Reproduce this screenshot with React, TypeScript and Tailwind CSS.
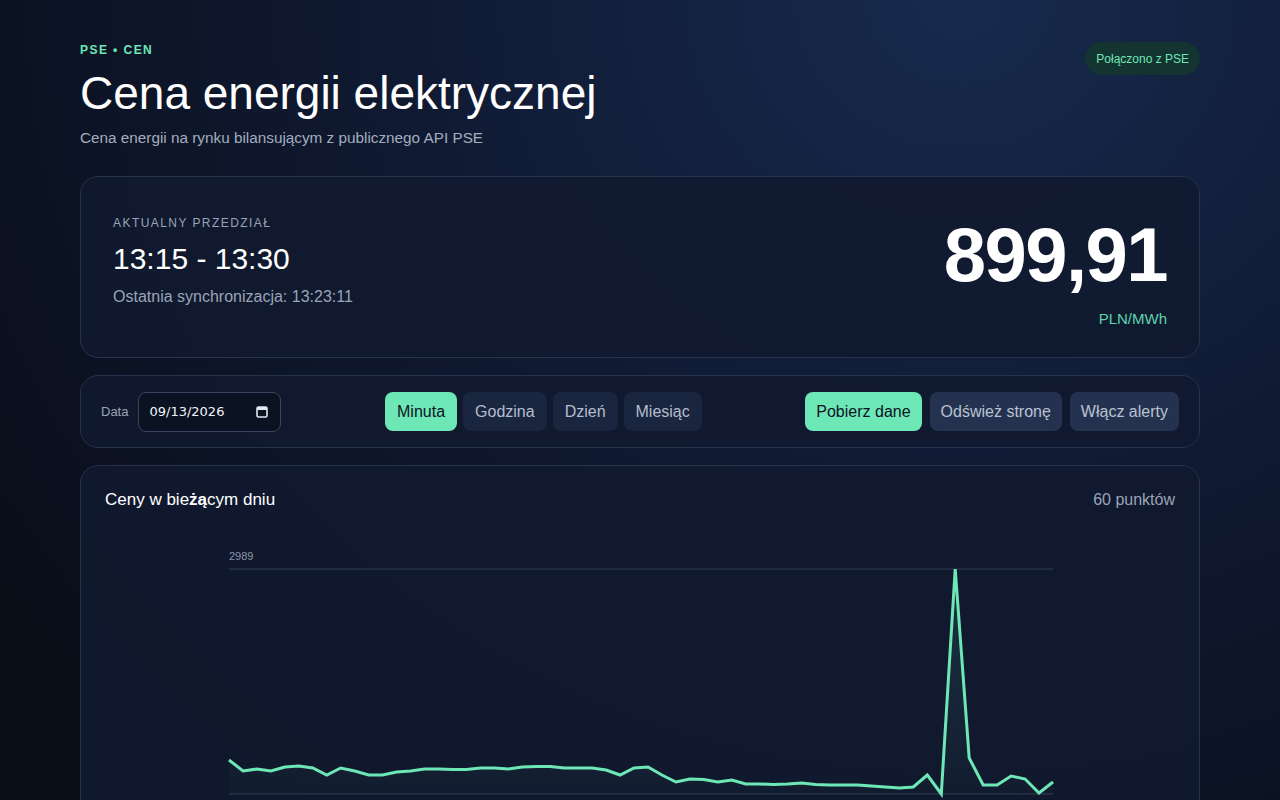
import { useState } from "react";

// ─── Data ─────────────────────────────────────────────────────────────────────

// y offsets (px) within the plot, 0 = max (2989), 225 = min
const series = [
  191, 202, 200, 202, 198, 197, 199, 206, 199, 202, 206, 206, 203, 202, 200, 200,
  200.5, 200.5, 199, 199, 200, 198, 197.5, 197.5, 199, 199, 199, 201, 206, 199,
  198, 206, 213, 210, 210.5, 213, 211, 215, 215, 215.5, 215, 214, 215.5, 216, 216,
  216, 217, 218, 219, 218, 206, 225, 0, 189, 216, 216, 207, 210, 224, 213,
];

const tabs = ["Minuta", "Godzina", "Dzień", "Miesiąc"];

// ─── Chart ────────────────────────────────────────────────────────────────────

function PriceChart() {
  const left = 124;
  const width = 824;
  const top = 38;
  const step = width / (series.length - 1);
  const pts = series.map((v, i) => [left + i * step, top + v] as const);
  const line = pts.map(([x, y], i) => `${i === 0 ? "M" : "L"}${x.toFixed(1)},${y}`).join(" ");
  const area = `${line} L${left + width},${top + 225} L${left},${top + 225} Z`;

  return (
    <svg width="1072" height="300" viewBox="0 0 1072 300" className="block">
      <defs>
        <linearGradient id="fill" x1="0" y1="0" x2="0" y2="1">
          <stop offset="0%" stopColor="#6ee7b7" stopOpacity="0.12" />
          <stop offset="100%" stopColor="#6ee7b7" stopOpacity="0.02" />
        </linearGradient>
      </defs>
      <text x={left} y={29} fill="#8b96ab" fontSize="11" fontFamily="Liberation Sans, sans-serif">
        2989
      </text>
      <line x1={left} x2={left + width} y1={top} y2={top} stroke="#26314a" strokeWidth="1.5" />
      <line x1={left} x2={left + width} y1={top + 225} y2={top + 225} stroke="#26314a" strokeWidth="1.5" />
      <path d={area} fill="url(#fill)" />
      <path d={line} fill="none" stroke="#6ee7b7" strokeWidth="3" strokeLinejoin="miter" strokeMiterlimit={10} />
    </svg>
  );
}

// ─── Page ─────────────────────────────────────────────────────────────────────

export default function App() {
  const [tab, setTab] = useState("Minuta");

  return (
    <div className="min-h-screen w-full bg-[#090e19] bg-[radial-gradient(ellipse_at_75%_0%,#172a4e_0%,#101a33_40%,#090e19_85%)] font-['Liberation_Sans',sans-serif] text-slate-100">
      <div className="mx-auto w-[1120px] pt-[42px]">
        {/* Header */}
        <div className="flex items-start justify-between">
          <div>
            <p className="text-[12px] font-bold leading-[16px] tracking-[0.12em] text-[#6ee7b7]">PSE • CEN</p>
            <h1 className="mt-[9px] text-[46px] leading-[52px] text-white">Cena energii elektrycznej</h1>
            <p className="mt-[9px] text-[15.3px] leading-[20px] text-[#a3adbf]">
              Cena energii na rynku bilansującym z publicznego API PSE
            </p>
          </div>
          <span className="inline-flex h-[33px] items-center rounded-full bg-[#133430] px-[11px] text-[12px] text-[#6ee7b7]">
            Połączono z PSE
          </span>
        </div>

        {/* Current interval */}
        <div className="mt-[28px] flex h-[182px] items-start justify-between rounded-[18px] border border-[#27324b] bg-[#111a2f]/90 px-[32px] pt-[37px]">
          <div>
            <p className="text-[12px] tracking-[0.12em] text-[#9aa4b8]">AKTUALNY PRZEDZIAŁ</p>
            <p className="mt-[8px] text-[30px] leading-[38px] text-white">13:15 - 13:30</p>
            <p className="mt-[7px] text-[16px] text-[#9aa4b8]">Ostatnia synchronizacja: 13:23:11</p>
          </div>
          <div className="flex flex-col items-end">
            <p className="text-[76px] font-semibold leading-[82px] tracking-[-0.02em] text-white">899,91</p>
            <p className="mt-[12px] text-[15px] text-[#5fd3ad]">PLN/MWh</p>
          </div>
        </div>

        {/* Controls */}
        <div className="mt-[17px] flex h-[73px] items-center justify-between rounded-[18px] border border-[#27324b] bg-[#111a2f]/90 px-[20px]">
          <div className="flex items-center gap-[10px]">
            <span className="text-[13px] text-[#9aa4b8]">Data</span>
            <div className="flex h-[40px] w-[143px] items-center justify-between rounded-[8px] border border-[#39455f] bg-[#0b1222] pl-[10px] pr-[12px]">
              <span className="font-['DejaVu_Sans',sans-serif] text-[13px] text-slate-100">09/13/2026</span>
              <svg width="12" height="13" viewBox="0 0 12 13">
                <rect x="1" y="2" width="10" height="10" rx="1.5" fill="none" stroke="#e2e8f0" strokeWidth="1.6" />
                <rect x="1" y="2" width="10" height="3" fill="#e2e8f0" />
              </svg>
            </div>
          </div>
          <div className="flex items-center gap-[6px]">
            {tabs.map((t) => (
              <button
                key={t}
                onClick={() => setTab(t)}
                className={`h-[39px] rounded-[8px] px-[12px] text-[16px] ${
                  tab === t ? "bg-[#6ee7b7] text-[#0b1322]" : "bg-[#1a2540] text-[#b4bdcd]"
                }`}
              >
                {t}
              </button>
            ))}
          </div>
          <div className="flex items-center gap-[8px]">
            <button className="h-[39px] rounded-[8px] bg-[#6ee7b7] px-[11px] text-[16px] text-[#0b1322]">Pobierz dane</button>
            <button className="h-[39px] rounded-[8px] bg-[#25324f] px-[11px] text-[16px] text-[#b9c2d2]">Odśwież stronę</button>
            <button className="h-[39px] rounded-[8px] bg-[#25324f] px-[11px] text-[16px] text-[#b9c2d2]">Włącz alerty</button>
          </div>
        </div>

        {/* Chart */}
        <div className="mt-[17px] h-[400px] rounded-[18px] border border-[#27324b] bg-[#111a2f]/90 px-[24px] pt-[21px]">
          <div className="flex items-center justify-between">
            <h2 className="text-[17px] text-white">
              Ceny w bie<span className="font-bold">żą</span>cym dniu
            </h2>
            <span className="text-[16px] text-[#9aa4b8]">60 punktów</span>
          </div>
          <div className="mt-[18px]">
            <PriceChart />
          </div>
        </div>
      </div>
    </div>
  );
}
